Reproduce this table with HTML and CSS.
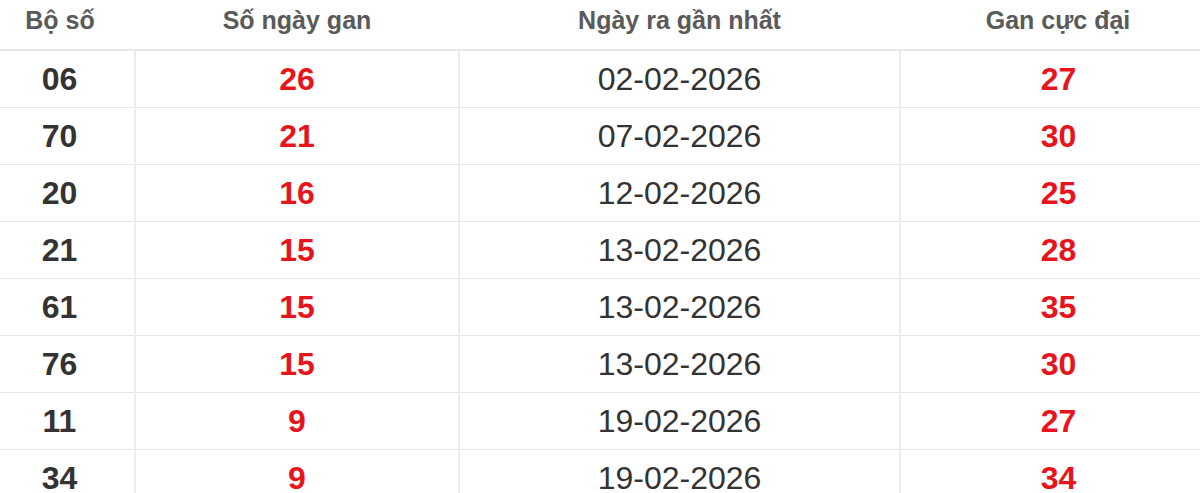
FILE: index.html
```html
<!DOCTYPE html>
<html lang="vi">
<head>
<meta charset="utf-8">
<title>Lô gan</title>
<link rel="stylesheet" href="styles.css">
</head>
<body>
<div class="wrap">
<table class="gan">
  <colgroup>
    <col class="c1"><col class="c2"><col class="c3"><col class="c4">
  </colgroup>
  <thead>
    <tr><th>Bộ số</th><th>Số ngày gan</th><th>Ngày ra gần nhất</th><th>Gan cực đại</th></tr>
  </thead>
  <tbody>
    <tr><td class="num">06</td><td class="red">26</td><td class="date">02-02-2026</td><td class="red">27</td></tr>
    <tr><td class="num">70</td><td class="red">21</td><td class="date">07-02-2026</td><td class="red">30</td></tr>
    <tr><td class="num">20</td><td class="red">16</td><td class="date">12-02-2026</td><td class="red">25</td></tr>
    <tr><td class="num">21</td><td class="red">15</td><td class="date">13-02-2026</td><td class="red">28</td></tr>
    <tr><td class="num">61</td><td class="red">15</td><td class="date">13-02-2026</td><td class="red">35</td></tr>
    <tr><td class="num">76</td><td class="red">15</td><td class="date">13-02-2026</td><td class="red">30</td></tr>
    <tr><td class="num">11</td><td class="red">9</td><td class="date">19-02-2026</td><td class="red">27</td></tr>
    <tr><td class="num">34</td><td class="red">9</td><td class="date">19-02-2026</td><td class="red">34</td></tr>
  </tbody>
</table>
</div>
</body>
</html>
```

FILE: styles.css
```css
html, body {
  margin: 0;
  padding: 0;
  background: #fff;
  overflow: hidden;
}
.wrap {
  width: 1200px;
  overflow: hidden;
}
.gan {
  margin-left: -15px;
  width: 1231px;
  border-collapse: collapse;
  table-layout: fixed;
  font-family: "Liberation Sans", Arial, sans-serif;
}
.c1 { width: 150px; }
.c2 { width: 324px; }
.c3 { width: 441px; }
.c4 { width: 316px; }
.gan th {
  height: 49px;
  padding: 0;
  vertical-align: top;
  line-height: 40px;
  font-size: 25px;
  font-weight: bold;
  color: #5a5a5a;
  text-align: center;
  border-bottom: 2px solid #e8e8e8;
}
.gan td {
  height: 56px;
  padding: 0;
  text-align: center;
  font-size: 32px;
  line-height: 1;
  border-top: 1px solid #e6e6e6;
  border-bottom: 1px solid #e6e6e6;
  border-left: 2px solid #ececec;
}
.gan td:first-child { border-left: none; }
.gan td.num { font-weight: bold; color: #333; }
.gan td.red { font-weight: bold; color: #e8141b; }
.gan td.date { color: #333; }
```
